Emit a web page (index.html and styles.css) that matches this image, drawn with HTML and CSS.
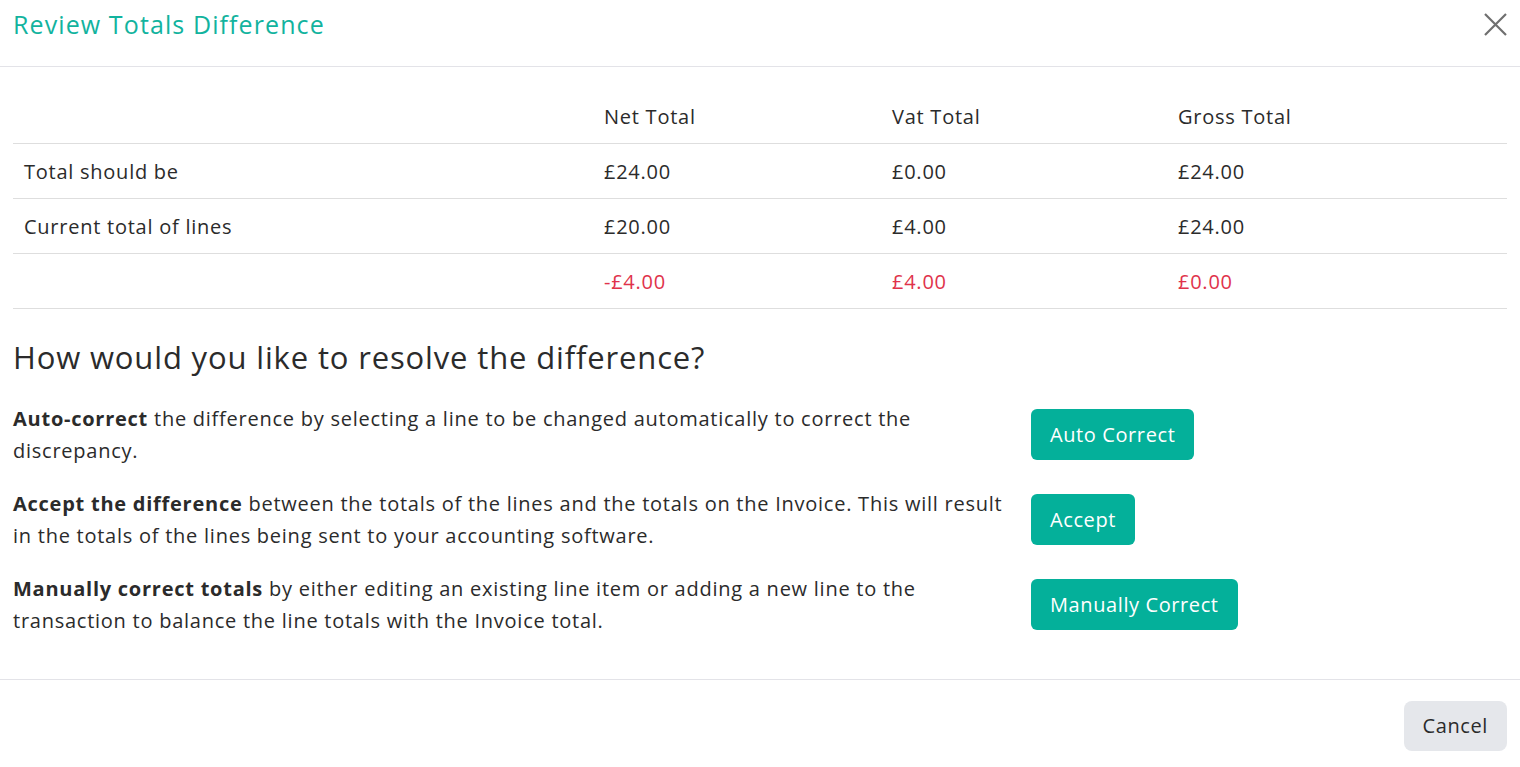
FILE: index.html
```html
<!DOCTYPE html>
<html lang="en">
<head>
<meta charset="utf-8">
<title>Review Totals Difference</title>
<link rel="stylesheet" href="styles.css">
</head>
<body>
<div class="modal">
  <header class="modal-header">
    <h1 class="modal-title">Review Totals Difference</h1>
    <button class="close-btn" aria-label="Close">
      <svg width="25" height="23" viewBox="0 0 25 23"><path d="M2 1 L23 22 M23 1 L2 22" stroke="#6f6f6f" stroke-width="2.2" fill="none" stroke-linecap="butt"/></svg>
    </button>
  </header>
  <main class="modal-body">
    <table class="totals">
      <colgroup>
        <col class="c1"><col class="c2"><col class="c3"><col class="c4">
      </colgroup>
      <thead>
        <tr><th></th><th>Net Total</th><th>Vat Total</th><th>Gross Total</th></tr>
      </thead>
      <tbody>
        <tr><td>Total should be</td><td>£24.00</td><td>£0.00</td><td>£24.00</td></tr>
        <tr><td>Current total of lines</td><td>£20.00</td><td>£4.00</td><td>£24.00</td></tr>
        <tr class="diff"><td></td><td>-£4.00</td><td>£4.00</td><td>£0.00</td></tr>
      </tbody>
    </table>

    <h2 class="question">How would you like to resolve the difference?</h2>

    <div class="options">
      <div class="option">
        <p class="option-text"><strong>Auto-correct</strong> the difference by selecting a line to be changed automatically to correct the discrepancy.</p>
        <div class="option-action"><button class="btn btn-primary">Auto Correct</button></div>
      </div>
      <div class="option">
        <p class="option-text"><strong>Accept the difference</strong> between the totals of the lines and the totals on the Invoice. This will result in the totals of the lines being sent to your accounting software.</p>
        <div class="option-action"><button class="btn btn-primary">Accept</button></div>
      </div>
      <div class="option">
        <p class="option-text"><strong>Manually correct totals</strong> by either editing an existing line item or adding a new line to the transaction to balance the line totals with the Invoice total.</p>
        <div class="option-action"><button class="btn btn-primary">Manually Correct</button></div>
      </div>
    </div>
  </main>
  <footer class="modal-footer">
    <button class="btn btn-secondary">Cancel</button>
  </footer>
</div>
</body>
</html>
```

FILE: styles.css
```css
* { box-sizing: border-box; }

html, body {
  margin: 0;
  padding: 0;
  background: #ffffff;
}

body {
  font-family: "Open Sans", "Liberation Sans", sans-serif;
  color: #2b2b2b;
  letter-spacing: 0.65px;
}

.modal {
  width: 1520px;
  min-height: 767px;
  display: flex;
  flex-direction: column;
}

.modal-header {
  height: 67px;
  border-bottom: 1px solid #e3e3e8;
  display: flex;
  justify-content: space-between;
  align-items: flex-start;
  padding: 7px 12px 0 13px;
}

.modal-title {
  margin: 0;
  font-size: 25px;
  line-height: 34px;
  font-weight: 500;
  color: #12b39e;
  letter-spacing: 1.1px;
}

.close-btn {
  background: none;
  border: 0;
  padding: 0;
  margin-top: 6px;
  width: 25px;
  height: 23px;
  cursor: pointer;
}

.modal-body {
  padding: 21px 13px 0 13px;
}

.totals {
  width: 100%;
  border-collapse: collapse;
  table-layout: fixed;
  font-size: 20px;
  letter-spacing: 0.75px;
}

.totals col.c1 { width: 579px; }
.totals col.c2 { width: 288px; }
.totals col.c3 { width: 286px; }

.totals th,
.totals td {
  height: 55px;
  padding: 2px 11px 0 12px;
  text-align: left;
  font-weight: 400;
  vertical-align: middle;
  border-bottom: 1px solid #dedede;
}

.totals td:first-child { padding-left: 11px; }

.totals th { padding-top: 2px; }

.totals tr.diff td { color: #e0334b; }

.question {
  margin: 28px 0 0 0;
  font-size: 31px;
  line-height: 40px;
  font-weight: 400;
  color: #2b2b2b;
  letter-spacing: 0.85px;
}

.options {
  margin-top: 26px;
  display: flex;
  flex-direction: column;
  gap: 21px;
}

.option {
  display: grid;
  grid-template-columns: 1005px auto;
  column-gap: 13px;
  align-items: center;
}

.option-text {
  margin: 0;
  font-size: 20px;
  line-height: 32px;
  letter-spacing: 0.75px;
}

.option-text strong { font-weight: 700; }

.option-action {
  display: flex;
  align-items: center;
}

.btn {
  font-family: inherit;
  font-size: 20px;
  letter-spacing: 0.6px;
  border: 0;
  cursor: pointer;
  line-height: 27px;
}

.btn-primary {
  background: #04b09a;
  color: #ffffff;
  font-weight: 500;
  padding: 12px 19px;
  border-radius: 6px;
  height: 51px;
}

.modal-footer {
  margin-top: 42px;
  border-top: 1px solid #e3e3e8;
  padding: 21px 13px 0 0;
  display: flex;
  justify-content: flex-end;
}

.btn-secondary {
  background: #e5e7eb;
  color: #2b2b2b;
  font-weight: 400;
  height: 50px;
  padding: 0 19px;
  border-radius: 8px;
}
```
